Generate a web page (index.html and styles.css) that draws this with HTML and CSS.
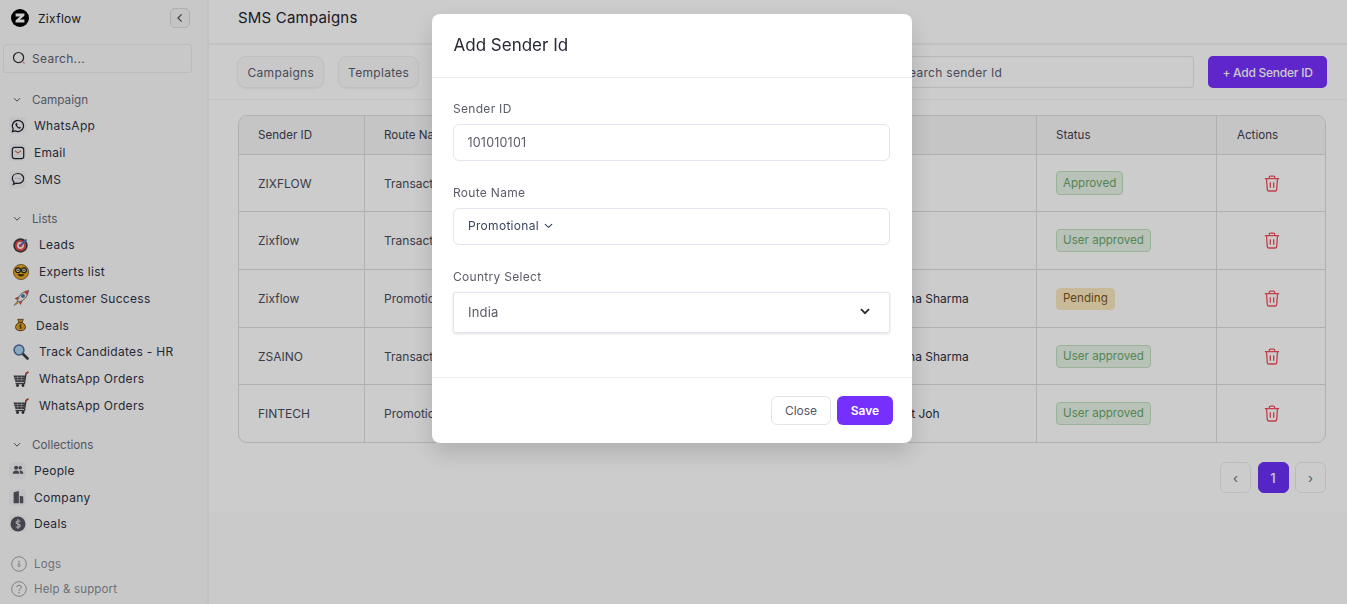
FILE: index.html
```html
<!DOCTYPE html>
<html lang="en">
<head>
<meta charset="utf-8">
<title>SMS Campaigns</title>
<link rel="stylesheet" href="styles.css">
</head>
<body>
<div class="app">
  <aside class="sidebar">
    <div class="brand">
      <svg class="logo" viewBox="0 0 18 18"><circle cx="9" cy="9" r="9" fill="#000"/><path d="M4.600 4.600h8.800v2.200L9 10.400h4.400v3H4.600v-2.200L9 7.600H4.600z" fill="#fff"/></svg>
      <span class="brand-name">Zixflow</span>
      <button class="collapse"><svg viewBox="0 0 10 12" width="8" height="10"><path d="M7 1.500 2.500 6 7 10.500" fill="none" stroke="#555" stroke-width="1.600"/></svg></button>
    </div>
    <div class="side-search">
      <svg viewBox="0 0 16 16" width="15" height="15"><circle cx="7" cy="7" r="5.400" fill="none" stroke="#2b2b35" stroke-width="1.300"/><path d="M11.500 11.500l2 2" stroke="#e08a8a" stroke-width="1.200"/></svg>
      <span>Search...</span>
    </div>

    <div class="group-title"><svg class="chev" viewBox="0 0 8 6"><path d="M1 1.200 4 4.200 7 1.200" fill="none" stroke="#555" stroke-width="1"/></svg>Campaign</div>
    <a class="item"><span class="tile"><svg viewBox="0 0 16 16" width="14" height="14"><path d="M8 1.500a6.400 6.400 0 0 0-5.500 9.700L1.600 14.500l3.400-.9A6.400 6.400 0 1 0 8 1.500z" fill="none" stroke="#1d1d28" stroke-width="1.400"/><path d="M5.600 4.800c-.8.800-.7 2 .4 3.500s2.500 2.700 3.800 2.700c.8 0 1.400-.5 1.500-1.200L10 8.900l-.8.700C8.300 9.200 7.300 8.200 6.900 7.200l.6-.8-.9-1.700z" fill="#1d1d28"/></svg></span>WhatsApp</a>
    <a class="item"><span class="tile"><svg viewBox="0 0 16 16" width="14" height="14"><rect x="1.500" y="1.500" width="13" height="13" rx="2.500" fill="none" stroke="#23232d" stroke-width="1.400"/><path d="M4.500 5.500 8 8l3.500-2.500" fill="none" stroke="#d0705a" stroke-width="1.300"/></svg></span>Email</a>
    <a class="item"><span class="tile"><svg viewBox="0 0 16 16" width="14" height="14"><path d="M8 1.700c-3.700 0-6.500 2.500-6.500 5.700 0 1.600.7 3 1.900 4l-.7 2.700 3-1.400c.7.200 1.500.3 2.300.3 3.700 0 6.500-2.500 6.500-5.600S11.700 1.700 8 1.700z" fill="none" stroke="#23232d" stroke-width="1.400"/><path d="M5 7.500h6" stroke="#7aa0c8" stroke-width="1" stroke-dasharray="1 1.500"/></svg></span>SMS</a>

    <div class="group-title lists"><svg class="chev" viewBox="0 0 8 6"><path d="M1 1.200 4 4.200 7 1.200" fill="none" stroke="#555" stroke-width="1"/></svg>Lists</div>
    <a class="item emoji"><svg class="emo" viewBox="0 0 16 16"><circle cx="7.500" cy="8.500" r="7.200" fill="#3b3b3b"/><circle cx="7.500" cy="8.500" r="5.600" fill="#e8494a"/><circle cx="7.500" cy="8.500" r="3.400" fill="#f4eeee"/><circle cx="7.500" cy="8.500" r="1.700" fill="#e8494a"/><path d="M8 8 13.500 2.500" stroke="#3f78c8" stroke-width="2"/></svg>Leads</a>
    <a class="item emoji"><svg class="emo" viewBox="0 0 16 16"><circle cx="8" cy="8" r="7.600" fill="#e8a51e" stroke="#3a2a0e" stroke-width=".6"/><circle cx="5" cy="6.300" r="2.400" fill="#f2e3b5" stroke="#222" stroke-width="1.200"/><circle cx="11" cy="6.300" r="2.400" fill="#f2e3b5" stroke="#222" stroke-width="1.200"/><circle cx="5" cy="6.300" r=".8" fill="#222"/><circle cx="11" cy="6.300" r=".8" fill="#222"/><path d="M4.500 10.300c1.500 3 5.500 3 7 0z" fill="#3a2413"/></svg>Experts list</a>
    <a class="item emoji"><svg class="emo" viewBox="0 0 16 16"><path d="M4.500 11.500C5 6 9 1.800 15.500.5c-.8 6.500-4.800 10.300-9.500 11.500z" fill="#eeeef2" stroke="#50505c" stroke-width=".8"/><path d="M15.500.5c-1.700.3-3.200.9-4.400 1.600l2.800 2.800c.8-1.200 1.300-2.700 1.600-4.400z" fill="#e0473b"/><circle cx="10" cy="6" r="1.600" fill="#3f7fc8" stroke="#333" stroke-width=".4"/><path d="M5.500 6.500 1.500 8.500l3 1.500zM9.500 11l-2 4-1.500-3z" fill="#c9402f"/><path d="M4 11.500l-3.200 4 4-2z" fill="#e5a12a" stroke="#555" stroke-width=".4"/></svg>Customer Success</a>
    <a class="item emoji deals"><svg class="emo" viewBox="0 0 16 16"><path d="M4.500 1h7L10 5H6z" fill="#d8941c" stroke="#3d2a0c" stroke-width=".8"/><path d="M6 5h4c3 1.500 4.500 4 4 6.500-.4 2.300-2.500 3.500-6 3.500s-5.600-1.200-6-3.500C1.500 9 3 6.500 6 5z" fill="#e0a024" stroke="#3d2a0c" stroke-width="1"/><path d="M9.500 8.300C8.800 7.700 6.800 7.800 6.800 9c0 1.400 2.700.8 2.700 2.200 0 1.200-2 1.200-2.800.6M8 7v6" fill="none" stroke="#3d2a0c" stroke-width=".8"/></svg>Deals</a>
    <a class="item emoji"><svg class="emo" viewBox="0 0 16 16"><path d="M9.500 9.500 14.500 14.500" stroke="#3d3d48" stroke-width="2.600" stroke-linecap="round"/><circle cx="6" cy="6" r="4.900" fill="#a9d2ee" stroke="#4a6f96" stroke-width="1.500"/></svg>Track Candidates - HR</a>
    <a class="item emoji"><svg class="emo" viewBox="0 0 16 16"><path d="M.5 4.500h12l-1.200 6.500H2.500z" fill="#44444c"/><path d="M1.500 6.500h10M2 8.700h9M4.500 4.500l.5 6.500M8.500 4.500l-.3 6.500" stroke="#c9c9c9" stroke-width=".5"/><path d="M2.500 12.500h9L13 2.500" fill="none" stroke="#44444c" stroke-width="1.300"/><path d="M12.500 3 15.500 .8" stroke="#c9402f" stroke-width="1.800"/><circle cx="4.500" cy="14.500" r="1.400" fill="#2e2e36"/><circle cx="10" cy="14.500" r="1.400" fill="#2e2e36"/></svg>WhatsApp Orders</a>
    <a class="item emoji"><svg class="emo" viewBox="0 0 16 16"><path d="M.5 4.500h12l-1.200 6.500H2.500z" fill="#44444c"/><path d="M1.500 6.500h10M2 8.700h9M4.500 4.500l.5 6.500M8.500 4.500l-.3 6.500" stroke="#c9c9c9" stroke-width=".5"/><path d="M2.500 12.500h9L13 2.500" fill="none" stroke="#44444c" stroke-width="1.300"/><path d="M12.500 3 15.500 .8" stroke="#c9402f" stroke-width="1.800"/><circle cx="4.500" cy="14.500" r="1.400" fill="#2e2e36"/><circle cx="10" cy="14.500" r="1.400" fill="#2e2e36"/></svg>WhatsApp Orders</a>

    <div class="group-title collections"><svg class="chev" viewBox="0 0 8 6"><path d="M1 1.200 4 4.200 7 1.200" fill="none" stroke="#555" stroke-width="1"/></svg>Collections</div>
    <a class="item"><span class="tile"><svg viewBox="0 0 16 16" width="12" height="12"><circle cx="5.500" cy="5" r="2.700" fill="#555560"/><circle cx="11" cy="5" r="2.400" fill="#555560"/><path d="M1 13c0-3 2-4.500 4.500-4.500S10 10 10 13zM11 13c0-1.800-.4-3-1.200-4.200 2.800-.5 5.200.9 5.200 4.200z" fill="#555560"/></svg></span>People</a>
    <a class="item"><span class="tile"><svg viewBox="0 0 16 16" width="14" height="14"><path d="M3 15V2.500L9 1v14zM10 15V6.500l4 1V15z" fill="#555560"/></svg></span>Company</a>
    <a class="item"><span class="tile"><svg viewBox="0 0 16 16" width="16" height="16"><circle cx="8" cy="8" r="7.500" fill="#555560"/><path d="M10.500 5.500C9.500 4.600 6 4.700 6 6.500c0 2.200 4.300 1.100 4.300 3.300 0 1.800-3.400 1.800-4.600.8M8 3v10" fill="none" stroke="#dcdcdc" stroke-width="1.100"/></svg></span>Deals</a>

    <div class="side-foot">
      <a class="foot-item"><svg viewBox="0 0 16 16" width="16" height="16"><circle cx="8" cy="8" r="7.300" fill="none" stroke="#8a8a8a" stroke-width=".8"/><path d="M8 4.500v3.500" stroke="#8a8a8a" stroke-width=".8"/><circle cx="8" cy="9.500" r="1.200" fill="none" stroke="#8a8a8a" stroke-width=".7"/></svg>Logs</a>
      <a class="foot-item"><svg viewBox="0 0 16 16" width="16" height="16"><circle cx="8" cy="8" r="7.300" fill="none" stroke="#8a8a8a" stroke-width=".8"/><path d="M5.800 6.200C6 4.800 7 4.300 8 4.300c1.300 0 2.300.8 2.300 2 0 1.800-2.300 1.700-2.300 3.500" fill="none" stroke="#8a8a8a" stroke-width="1"/><circle cx="8" cy="11.700" r=".7" fill="#8a8a8a"/></svg>Help &amp; support</a>
    </div>
  </aside>

  <main class="main">
    <header class="topbar"><h1 class="page-title">SMS Campaigns</h1></header>
    <div class="toolbar">
      <button class="tab">Campaigns</button>
      <button class="tab">Templates</button>
      <button class="tab">Sender ID</button>
      <div class="search-box">Search sender Id</div>
      <button class="primary-btn">+ Add Sender ID</button>
    </div>
    <section class="content">
      <table class="grid">
        <colgroup><col class="c1"><col class="c2"><col class="c3"><col class="c4"><col class="c5"><col class="c6"></colgroup>
        <thead>
          <tr><th>Sender ID</th><th>Route Name</th><th></th><th></th><th>Status</th><th class="act-h">Actions</th></tr>
        </thead>
        <tbody>
          <tr><td>ZIXFLOW</td><td>Transactional</td><td></td><td></td><td><span class="badge ok">Approved</span></td><td class="act"><svg class="trash" viewBox="0 0 16 17"><path d="M.8 3.700h14.400M5.300 3.500V2.200c0-.6.400-1 1-1h3.400c.6 0 1 .4 1 1v1.300M2.500 3.700l.8 10.900c.1 .8.700 1.400 1.500 1.400h6.400c.8 0 1.400-.6 1.500-1.400l.8-10.900M6.300 7.200v5.500M9.700 7.200v5.500" fill="none" stroke="#f2505e" stroke-width="1.300"/></svg></td></tr>
          <tr><td>Zixflow</td><td>Transactional</td><td></td><td></td><td><span class="badge ok slim">User approved</span></td><td class="act"><svg class="trash" viewBox="0 0 16 17"><path d="M.8 3.700h14.400M5.300 3.500V2.200c0-.6.400-1 1-1h3.400c.6 0 1 .4 1 1v1.300M2.500 3.700l.8 10.900c.1 .8.700 1.400 1.500 1.400h6.400c.8 0 1.400-.6 1.500-1.400l.8-10.900M6.300 7.200v5.500M9.700 7.200v5.500" fill="none" stroke="#f2505e" stroke-width="1.300"/></svg></td></tr>
          <tr><td>Zixflow</td><td>Promotional</td><td></td><td class="owner name-long">Neha Sharma</td><td><span class="badge wait">Pending</span></td><td class="act"><svg class="trash" viewBox="0 0 16 17"><path d="M.8 3.700h14.400M5.300 3.500V2.200c0-.6.400-1 1-1h3.400c.6 0 1 .4 1 1v1.300M2.500 3.700l.8 10.900c.1 .8.700 1.400 1.500 1.400h6.400c.8 0 1.400-.6 1.500-1.400l.8-10.900M6.300 7.200v5.500M9.700 7.200v5.500" fill="none" stroke="#f2505e" stroke-width="1.300"/></svg></td></tr>
          <tr><td>ZSAINO</td><td>Transactional</td><td></td><td class="owner name-long">Neha Sharma</td><td><span class="badge ok slim">User approved</span></td><td class="act"><svg class="trash" viewBox="0 0 16 17"><path d="M.8 3.700h14.400M5.300 3.500V2.200c0-.6.400-1 1-1h3.400c.6 0 1 .4 1 1v1.300M2.500 3.700l.8 10.900c.1 .8.700 1.400 1.500 1.400h6.400c.8 0 1.400-.6 1.500-1.400l.8-10.900M6.300 7.200v5.500M9.700 7.200v5.500" fill="none" stroke="#f2505e" stroke-width="1.300"/></svg></td></tr>
          <tr><td>FINTECH</td><td>Promotional</td><td></td><td class="owner">Matt Joh</td><td><span class="badge ok slim">User approved</span></td><td class="act"><svg class="trash" viewBox="0 0 16 17"><path d="M.8 3.700h14.400M5.300 3.500V2.200c0-.6.400-1 1-1h3.400c.6 0 1 .4 1 1v1.300M2.500 3.700l.8 10.900c.1 .8.700 1.400 1.500 1.400h6.400c.8 0 1.400-.6 1.500-1.400l.8-10.900M6.300 7.200v5.500M9.700 7.200v5.500" fill="none" stroke="#f2505e" stroke-width="1.300"/></svg></td></tr>
        </tbody>
      </table>
      <nav class="pager">
        <button class="page">‹</button>
        <button class="page current">1</button>
        <button class="page">›</button>
      </nav>
    </section>
  </main>
</div>

<div class="overlay">
  <div class="modal">
    <div class="modal-head">Add Sender Id</div>
    <div class="modal-body">
      <label class="field-label">Sender ID</label>
      <div class="field">101010101</div>
      <label class="field-label">Route Name</label>
      <div class="field route">Promotional<svg viewBox="0 0 10 6" width="9" height="6"><path d="M1 1l4 3.500L9 1" fill="none" stroke="#2c3a55" stroke-width="1.200"/></svg></div>
      <label class="field-label">Country Select</label>
      <div class="field country"><span>India</span><svg viewBox="0 0 10 7" width="10" height="7"><path d="M1 1.200l4 4 4-4" fill="none" stroke="#2a2a35" stroke-width="1.800"/></svg></div>
    </div>
    <div class="modal-foot">
      <button class="btn-close">Close</button>
      <button class="btn-save">Save</button>
    </div>
  </div>
</div>
</body>
</html>
```

FILE: styles.css
```css
* { box-sizing: border-box; }
html, body { margin: 0; height: 100%; overflow: hidden; }
body { font-family: Inter, "Noto Sans", sans-serif; font-size: 12px; color: #2f3140; background: #fff; }
button { font-family: inherit; cursor: pointer; }

.app { display: flex; height: 604px; }

/* sidebar */
.sidebar { width: 209px; flex: none; display: flex; flex-direction: column; background: #fbfbfb; border-right: 2px solid #f4f4f4; padding: 8px 0 0 3px; }
.brand { display: flex; align-items: center; height: 20px; padding-left: 8px; }
.logo { width: 18px; height: 18px; }
.brand-name { margin-left: 9px; font-size: 12px; letter-spacing: .3px; color: #24242e; }
.collapse { margin-left: auto; margin-right: 17px; width: 20px; height: 20px; padding: 0; display: flex; align-items: center; justify-content: center; border: 1.500px solid #dcdcdc; border-radius: 5px; background: #f6f6f6; }
.side-search { display: flex; align-items: center; gap: 5px; width: 189px; height: 29px; margin-top: 16px; padding-left: 8px; border: 1px solid #ececec; border-radius: 3px; color: #5f6170; font-size: 12px; letter-spacing: .3px; }
.group-title { display: flex; align-items: center; height: 20px; margin-top: 17px; margin-bottom: 2.500px; padding-left: 10px; color: #6a6c7c; font-size: 11.700px; }
.group-title.lists { margin-top: 16.500px; margin-bottom: 2px; }
.group-title.collections { margin-top: 16px; margin-bottom: 2px; }
.chev { width: 8px; height: 6px; margin-right: 11px; }
.item { display: flex; align-items: center; height: 26.800px; padding-left: 6px; color: #2f3145; font-size: 12px; letter-spacing: .3px; }
.tile { width: 17px; height: 17px; margin-right: 8px; border-radius: 4px; background: #f3f3f6; display: flex; align-items: center; justify-content: center; flex: none; }
.item.emoji { padding-left: 10px; }
.emo { width: 16px; height: 16px; margin-right: 10px; flex: none; }
.item.deals .emo { width: 13px; margin-right: 9px; margin-left: 1px; }
.side-foot { margin-top: 17px; display: flex; flex-direction: column; gap: 5px; }
.foot-item { display: flex; align-items: center; gap: 7px; height: 20px; padding-left: 8px; color: #8a8c96; font-size: 11.500px; letter-spacing: .15px; }

/* main */
.main { flex: 1; min-width: 0; display: flex; flex-direction: column; background: #fdfdfd; }
.topbar { height: 45px; padding: 9px 0 0 29px; background: #fff; border-bottom: 2px solid #f3f3f3; }
.page-title { margin: 0; font-size: 15px; line-height: 18px; font-weight: 400; letter-spacing: .2px; color: #22232e; }
.toolbar { display: flex; align-items: center; height: 55px; padding: 0 20px 0 28px; gap: 14px; background: #fff; border-bottom: 1px solid #f3f3f3; }
.tab { height: 32px; padding: 0 8.500px 0 9.500px; border: 1px solid #f0f0f0; border-radius: 9px; background: #fafafa; color: #5a5c70; font-size: 12px; letter-spacing: .3px; box-shadow: 0 1px 2px rgba(0,0,0,.06); }
.search-box { width: 306px; height: 32px; margin-left: auto; padding-left: 12px; display: flex; align-items: center; border: 1px solid #e6e6e6; border-radius: 3px; color: #5a5c70; font-size: 12px; letter-spacing: .3px; }
.primary-btn { width: 119px; height: 32px; padding: 0; border: 0; border-radius: 5px; background: #7630fe; color: #fff; font-size: 12px; font-weight: 500; letter-spacing: -.25px; }
.content { height: 412px; padding: 15px 21px 0 29px; background: #fff; }

.grid { width: 1088px; table-layout: fixed; border-collapse: separate; border-spacing: 0; border: 1px solid #dcdcdc; border-radius: 9px; font-size: 12px; color: #4a4c5c; }
.c1 { width: 126px; } .c2 { width: 266px; } .c3 { width: 240px; } .c4 { width: 166px; } .c5 { width: 180px; } .c6 { width: 108px; }
.grid th { height: 39px; padding: 0 0 0 19px; text-align: left; font-size: 11.600px; font-weight: 400; background: #f7f7f7; border-bottom: 1px solid #dcdcdc; border-right: 1px solid #dcdcdc; color: #3f4152; }
.grid th:first-child { border-top-left-radius: 9px; }
.grid th:last-child { border-top-right-radius: 9px; border-right: 0; }
.grid td { height: 58px; padding: 0 0 0 19px; border-bottom: 1px solid #dcdcdc; border-right: 1px solid #dcdcdc; }
.grid tr:nth-child(3n+1) td { height: 57px; }
.grid td:last-child { border-right: 0; }
.grid tr:last-child td { border-bottom: 0; height: 57px; }
.grid .owner { color: #2c2e40; }
.grid .name-long { padding-left: 21px; }
.grid .act-h { padding-left: 20px; }
.grid .act { padding: 0; }
.trash { display: block; width: 16px; height: 17px; margin-left: 47px; }
.badge { display: inline-block; vertical-align: middle; padding: 3.500px 6px; border: 1px solid #bfe0bf; border-radius: 4px; font-size: 11.600px; line-height: 15px; }
.badge.ok { background: #e6f3e6; color: #6aa86a; }
.badge.slim { padding: 3px 6px; }
.badge.wait { background: #fbe9c0; border-color: #fbe9c0; color: #7c5518; padding: 2.500px 6px; }

.pager { display: flex; justify-content: flex-end; gap: 6.500px; margin-top: 19px; }
.page { width: 31px; height: 31px; padding: 0; border: 1px solid #ececec; border-radius: 6px; background: #fff; color: #5f7088; font-size: 13px; }
.page.current { background: #6b2ff8; border-color: #6b2ff8; color: #fff; font-weight: 500; }

/* modal */
.overlay { position: fixed; inset: 0; background: rgba(0,0,0,.2); }
.modal { position: absolute; left: 432px; top: 14px; width: 480px; height: 429px; display: flex; flex-direction: column; background: #fff; border-radius: 8px; box-shadow: 0 10px 25px rgba(0,0,0,.15); }
.modal-head { height: 64px; padding: 0 0 2px 21.500px; display: flex; align-items: center; font-size: 17px; color: #262834; border-bottom: 1px solid #ebebf2; }
.modal-body { flex: 1; padding: 21.500px 22px 0 21px; }
.field-label { display: block; height: 18px; font-size: 12px; line-height: 18px; letter-spacing: .3px; color: #5a5c68; }
.field { display: flex; align-items: center; height: 37px; margin: 6.500px 0 22.500px; padding: 0 0 1px 13.500px; border: 1px solid #e5e5f0; border-radius: 6px; font-size: 12.500px; letter-spacing: .2px; color: #5a5c68; }
.route { color: #3b4560; gap: 5px; font-size: 12px; letter-spacing: .3px; padding-left: 14px; padding-bottom: 2px; }
.country { height: 41px; margin-bottom: 0; justify-content: space-between; padding: 0 19px 2px 14px; border: 1.500px solid #e5e5f0; border-radius: 2px; box-shadow: 0 1px 3px rgba(0,0,0,.12); font-size: 13px; }
.modal-foot { height: 66px; display: flex; justify-content: flex-end; align-items: flex-start; gap: 6px; padding: 18px 19px 0 0; border-top: 1px solid #ebebf2; }
.btn-close { width: 60px; height: 29px; padding: 0; border: 1px solid #e3e3ea; border-radius: 6px; background: #fff; color: #555766; font-size: 12px; }
.btn-save { width: 56px; height: 29px; padding: 0; border: 0; border-radius: 6px; background: #7630fe; color: #fff; font-size: 12px; font-weight: 600; }
```
